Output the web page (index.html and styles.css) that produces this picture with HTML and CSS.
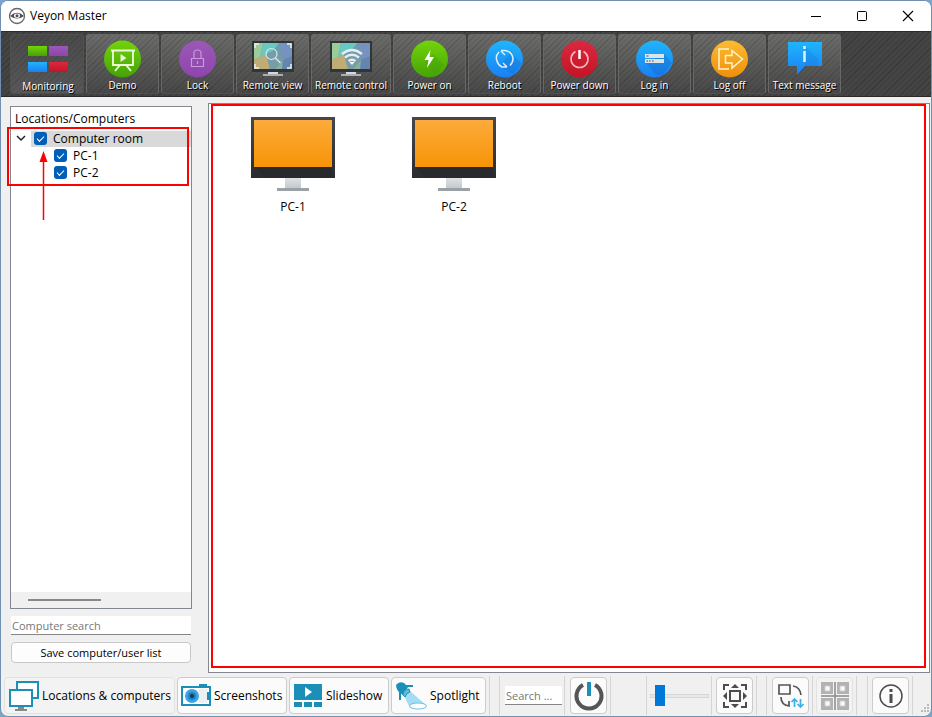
FILE: index.html
```html
<!DOCTYPE html>
<html lang="en">
<head>
  <meta charset="utf-8">
  <meta name="viewport" content="width=device-width, initial-scale=1">
  <title>Veyon Master</title>
  <link rel="stylesheet" href="styles.css">
</head>
<body>
  <!-- Shared icon parts -->
  <svg class="defs" width="0" height="0" aria-hidden="true">
    <defs>
      <linearGradient id="green" x1="0" y1="0" x2="0" y2="1"><stop offset="0" stop-color="#73d40a"/><stop offset="1" stop-color="#45a206"/></linearGradient>
      <linearGradient id="purple" x1="0" y1="0" x2="0" y2="1"><stop offset="0" stop-color="#9b59b6"/><stop offset="1" stop-color="#8e44ad"/></linearGradient>
      <linearGradient id="blue" x1="0" y1="0" x2="0" y2="1"><stop offset="0" stop-color="#1fb5fb"/><stop offset="1" stop-color="#1b7ff4"/></linearGradient>
      <linearGradient id="red" x1="0" y1="0" x2="0" y2="1"><stop offset="0" stop-color="#dc2840"/><stop offset="1" stop-color="#c31525"/></linearGradient>
      <linearGradient id="amber" x1="0" y1="0" x2="0" y2="1"><stop offset="0" stop-color="#fdbc2f"/><stop offset="1" stop-color="#ee8f0c"/></linearGradient>
      <linearGradient id="orange" x1="0" y1="0" x2="0" y2="1"><stop offset="0" stop-color="#fdab3c"/><stop offset="1" stop-color="#f79407"/></linearGradient>
      <linearGradient id="bezel" x1="0" y1="0" x2="0" y2="1"><stop offset="0" stop-color="#44484c"/><stop offset="1" stop-color="#2b2c30"/></linearGradient>
      <linearGradient id="stand" x1="0" y1="0" x2="0" y2="1"><stop offset="0" stop-color="#dde1e3"/><stop offset="1" stop-color="#c3c9cd"/></linearGradient>
      <symbol id="small-monitor" viewBox="0 0 42 40">
        <path d="M0 2h42v31H0z" fill="#30353a"/>
        <path d="M2 4h38v26H2z" fill="#6f9cab"/>
        <path d="M2 4h9L8 18l-6 3z" fill="#9ccb97"/>
        <path d="M11 4h16l-6 8-13 6z" fill="#68c9c2"/>
        <path d="M27 4h13v13l-9 4z" fill="#7693c0"/>
        <path d="M2 21l12-6 4 15H2z" fill="#bfad75"/>
        <path d="M21 12l10 9-8 9h-5l-4-15z" fill="#789da9"/>
        <path d="M31 21l9-4v13H23z" fill="#6684af"/>
        <path d="M31 21l-8 9h7z" fill="#85b39a"/>
        <path d="M16 33h10v3H16z" fill="#d3d8db"/>
        <path d="M11 35h20v2H11z" fill="#a8afb4"/>
      </symbol>
      <symbol id="monitor" viewBox="0 0 84 74">
        <path d="M0 0h84v61H0z" fill="url(#bezel)"/>
        <path d="M3 50h78v11H14z" fill="#292a2e"/>
        <path d="M3 3h78v47H3z" fill="url(#orange)"/>
        <path d="M34 61h16v10H34z" fill="url(#stand)"/>
        <path d="M26 71h32v3H26z" fill="#9aa1a7"/>
      </symbol>
    </defs>
  </svg>

  <div class="window">
    <header class="titlebar">
      <svg class="logo" width="18" height="18" viewBox="0 0 18 18" fill="none">
        <circle cx="9" cy="9" r="7.500" stroke="#63666a" stroke-width="1.300"/>
        <path d="M2 9Q9 2.500 16 9Q9 14 2 9z" fill="#4b4e52"/>
        <ellipse cx="9" cy="8.700" rx="3" ry="2.200" fill="#fff"/>
        <circle cx="9" cy="8.700" r="1.500" fill="#4b4e52"/>
      </svg>
      <h1>Veyon Master</h1>
      <div class="window-controls">
        <button type="button" aria-label="Minimize"><svg width="12" height="12"><path d="M1 6.500h10" stroke="#000"/></svg></button>
        <button type="button" aria-label="Maximize"><svg width="12" height="12"><rect x="1.500" y="1.500" width="9" height="9" rx="1" fill="none" stroke="#000"/></svg></button>
        <button type="button" aria-label="Close"><svg width="12" height="12"><path d="M1 1l10 10M11 1L1 11" stroke="#000" stroke-width="1.100"/></svg></button>
      </div>
    </header>

    <nav class="toolbar">
      <button class="tool active" type="button">
        <svg width="42" height="40" viewBox="0 0 42 40">
          <path d="M1 6h19v10H1z" fill="url(#green)"/><path d="M22 6h19v10H22z" fill="url(#purple)"/>
          <path d="M1 22h19v10H1z" fill="url(#blue)"/><path d="M22 22h19v10H22z" fill="url(#red)"/>
        </svg>
        Monitoring
      </button>
      <button class="tool" type="button">
        <svg width="42" height="40" viewBox="0 0 42 40">
          <circle cx="20.500" cy="20" r="18.500" fill="url(#green)"/>
          <path d="M9 11.500h24M11 12v14h20V12M18 26l-5 6M24 26l5 6" fill="none" stroke="#eaf8d8" stroke-width="1.900"/>
          <path d="M18.500 15l6 4-6 4z" fill="#eaf8d8"/>
        </svg>
        Demo
      </button>
      <button class="tool" type="button">
        <svg width="42" height="40" viewBox="0 0 42 40">
          <circle cx="20.500" cy="20" r="18.500" fill="url(#purple)"/>
          <path d="M14.500 19.500h12v8h-12zM17 19v-5q0-3 3.500-3t3.500 3v5M20.500 22v3" fill="none" stroke="#c99bdc" stroke-width="1.200"/>
        </svg>
        Lock
      </button>
      <button class="tool" type="button">
        <svg width="42" height="40" viewBox="0 0 42 40">
          <use href="#small-monitor" width="42" height="40"/>
          <path d="M3 9V5h4M35 5h4v4M3 25v4h4M35 29h4v-4" fill="none" stroke="#e8f3ee" stroke-width="1.500"/>
          <circle cx="19.500" cy="15" r="5.500" fill="none" stroke="#d9e8ea" stroke-width="1.200"/>
          <path d="M23.500 19l5 5" stroke="#d9e8ea" stroke-width="1.500"/>
        </svg>
        Remote view
      </button>
      <button class="tool wide" type="button">
        <svg width="42" height="40" viewBox="0 0 42 40">
          <use href="#small-monitor" width="42" height="40"/>
          <g fill="none" stroke="#e5eeef" stroke-width="2.400"><path d="M12 15q10-8 20 0M15 18.500q7-5.500 14 0M18.500 22q3.500-2.500 7 0"/></g>
          <path d="M19.500 23h5L22 26z" fill="#fff"/>
        </svg>
        Remote control
      </button>
      <button class="tool" type="button">
        <svg width="42" height="40" viewBox="0 0 42 40">
          <circle cx="20.500" cy="20" r="18.500" fill="url(#green)"/>
          <path d="M24 15l11 11-9 10-10-12z" fill="#3f9d08" opacity=".3"/>
          <path d="M21.500 11l-6 10h4L18 29l7-11h-4.500z" fill="#fff"/>
        </svg>
        Power on
      </button>
      <button class="tool" type="button">
        <svg width="42" height="40" viewBox="0 0 42 40">
          <circle cx="20.500" cy="20" r="18.500" fill="url(#blue)"/>
          <path d="M27 14l11 11-9 10-14-8z" fill="#1261bd" opacity=".25"/>
          <path d="M17 12l4 4M17 11.500h4q7 1 8 8 0 4-3 7M15 13q-4 4-2 9 1 4 5 6h5M23 28l-4-4" fill="none" stroke="#d8efff" stroke-width="1.500"/>
        </svg>
        Reboot
      </button>
      <button class="tool" type="button">
        <svg width="42" height="40" viewBox="0 0 42 40">
          <circle cx="20.500" cy="20" r="18.500" fill="url(#red)"/>
          <path d="M16.500 12.500a8.500 8.500 0 1 0 8 0" fill="none" stroke="#f3b8bd" stroke-width="1.600"/>
          <path d="M20.500 11v9" stroke="#fff" stroke-width="2.500"/>
        </svg>
        Power down
      </button>
      <button class="tool" type="button">
        <svg width="42" height="40" viewBox="0 0 42 40">
          <circle cx="20.500" cy="20" r="18.500" fill="url(#blue)"/>
          <path d="M30 15l8 9-9 12h-7l-10-12z" fill="#1261bd" opacity=".3"/>
          <path d="M11 15h19v4H11zM11 20h19v4H11z" fill="#dde3e6"/>
          <path d="M12.500 17h2M12.500 22h1.500M15 22h1.500M18 22h1.500" stroke="#6f7e88" stroke-width="1.500"/>
        </svg>
        Log in
      </button>
      <button class="tool" type="button">
        <svg width="42" height="40" viewBox="0 0 42 40">
          <circle cx="20.500" cy="20" r="18.500" fill="url(#amber)"/>
          <path d="M20 10H10v20h10M16.500 16.500H23v-5L33.500 20 23 29v-5h-6.500z" fill="none" stroke="#fff3ce" stroke-width="1.500"/>
        </svg>
        Log off
      </button>
      <button class="tool" type="button">
        <svg width="42" height="40" viewBox="0 0 42 40">
          <path d="M4 3h34v24H21l-8 9v-9H4z" fill="url(#blue)"/>
          <path d="M22 8l12 12v7H21z" fill="#1261bd" opacity=".15"/>
          <path d="M20.500 7v3M20.500 12v11" stroke="#dff2ff" stroke-width="2.500"/>
        </svg>
        Text message
      </button>
    </nav>

    <main class="content">
      <aside class="sidebar">
        <section class="tree">
          <h2>Locations/Computers</h2>
          <div class="tree-body">
            <div class="tree-row room">
              <svg class="chevron" width="10" height="7" viewBox="0 0 10 7"><path d="M1 1l4 4 4-4" fill="none" stroke="#222" stroke-width="1.500"/></svg>
              <label><input type="checkbox" checked>Computer room</label>
            </div>
            <div class="tree-row computer"><label><input type="checkbox" checked>PC-1</label></div>
            <div class="tree-row computer"><label><input type="checkbox" checked>PC-2</label></div>
            <div class="highlight"></div>
            <svg class="arrow" width="9" height="69" viewBox="0 0 9 69"><path d="M4.500 10v59" stroke="#f00" stroke-width="1.500"/><path d="M4.500 0L8.500 11h-8z" fill="#f00"/></svg>
          </div>
          <div class="tree-scroll"><span></span></div>
        </section>
        <input class="search" type="text" placeholder="Computer search" aria-label="Computer search">
        <button class="save" type="button">Save computer/user list</button>
      </aside>

      <section class="view">
        <div class="view-frame">
          <figure class="pc">
            <svg width="84" height="74"><use href="#monitor" width="84" height="74"/></svg>
            <figcaption>PC-1</figcaption>
          </figure>
          <figure class="pc">
            <svg width="84" height="74"><use href="#monitor" width="84" height="74"/></svg>
            <figcaption>PC-2</figcaption>
          </figure>
        </div>
      </section>
    </main>

    <footer class="statusbar">
      <div class="panel-buttons">
        <button class="btn pressed locations" type="button">
          <svg width="30" height="30" viewBox="0 0 30 30">
            <path d="M8 1h21v16H8z" fill="#fff" stroke="#1b8fb8" stroke-width="2"/>
            <path d="M1 9h22v16H1z" fill="#fff" stroke="#1b8fb8" stroke-width="2"/>
            <path d="M9 26h6v2h3v2H6v-2h3z" fill="#888"/>
          </svg>
          Locations &amp; computers
        </button>
        <button class="btn screenshots" type="button">
          <svg width="30" height="30" viewBox="0 0 30 30">
            <path d="M18 3h8v3h-8z" fill="#1b8fb8"/>
            <path d="M1 6h28v18H1z" fill="#fff" stroke="#1b8fb8" stroke-width="2"/>
            <path d="M18 8h8v14h-8z" fill="#edf0f2"/><path d="M26 11h3v8h-3z" fill="#1b8fb8"/>
            <circle cx="11" cy="15" r="7" fill="#38a4e2"/><circle cx="11" cy="15" r="4" fill="#2180c0"/><circle cx="11" cy="15" r="2" fill="#153957"/>
          </svg>
          Screenshots
        </button>
        <button class="btn slideshow" type="button">
          <svg width="30" height="30" viewBox="0 0 30 30">
            <path d="M1 3h28v16H1zM1 21h8v5H1zM11 21h8v5h-8zM21 21h8v5h-8z" fill="#1b8fb8"/><path d="M12 6l7 5-7 5z" fill="#fff"/>
          </svg>
          Slideshow
        </button>
        <button class="btn spotlight" type="button">
          <svg width="32" height="30" viewBox="0 0 32 30">
            <path d="M9 15l6-5 16 14q-3 4-16 3z" fill="#a3ddf5"/>
            <ellipse cx="23" cy="25" rx="8.500" ry="3" fill="#fff" stroke="#6fc3e4"/>
            <path d="M1 4q3-4 8-2l4 4-5 8q-7-4-7-10zM4 8h2v11H4zM9 4h9v2H9z" fill="#1b8fb8"/>
            <path d="M8 14q0-6 6-6l1 3q-4 1-5 5z" fill="#63bbd9" stroke="#1b8fb8"/>
          </svg>
          Spotlight
        </button>
      </div>

      <div class="group filter">
        <input class="search" type="text" placeholder="Search ..." aria-label="Search">
        <span class="divider"></span>
        <button class="btn square" type="button" aria-label="Powered on only">
          <svg width="30" height="30" viewBox="0 0 30 30">
            <path d="M9 4a12.500 12.500 0 1 0 12 0" fill="none" stroke="#555" stroke-width="4"/><path d="M15 1v14" stroke="#1b8fb8" stroke-width="4"/>
          </svg>
        </button>
      </div>

      <div class="group zoom">
        <input class="slider" type="range" min="0" max="100" value="9" aria-label="Icon size">
        <span class="divider"></span>
        <button class="btn square" type="button" aria-label="Fit">
          <svg width="30" height="30" viewBox="0 0 30 30" fill="none" stroke="#4d4d4d" stroke-width="2">
            <path d="M4 9V4h5M21 4h5v5M4 21v5h5M21 26h5v-5M10 10h10v10H10z"/>
            <path d="M15 3l4 4h-8zM15 27l4-4h-8zM3 15l4-4v8zM27 15l-4-4v8z" fill="#4d4d4d" stroke="none"/>
          </svg>
        </button>
      </div>

      <div class="group arrange">
        <button class="btn square" type="button" aria-label="Custom order">
          <svg width="30" height="30" viewBox="0 0 30 30" fill="none">
            <path d="M3 4h11v9H3zM17 5q7 1 8 9M5 16q0 8 8 9v-5" stroke="#555" stroke-width="1.700"/>
            <path d="M18.500 26v-8M15.500 21l3-3 3 3M24.500 18v8M21.500 23l3 3 3-3" stroke="#3daee9" stroke-width="1.700"/>
          </svg>
        </button>
        <span class="divider"></span>
        <button class="btn square pressed" type="button" aria-label="Align to grid">
          <svg width="30" height="30" viewBox="0 0 30 30" fill="none">
            <path d="M1 1h12v12H1zM17 1h12v12H17zM1 17h12v12H1zM17 17h12v12H17z" fill="#b2b2b2"/>
            <path d="M5 5h5v5H5zM20 5h5v5h-5zM5 20h5v5H5zM20 20h5v5h-5z" fill="#fafafa" stroke="#ccc"/>
            <path d="M15 1v28M1 15h28" stroke="#888" stroke-width="1.500"/>
          </svg>
        </button>
      </div>

      <div class="group about">
        <button class="btn square" type="button" aria-label="About">
          <svg width="30" height="30" viewBox="0 0 30 30" fill="none" stroke="#4d4d4d">
            <circle cx="15" cy="15" r="11" stroke-width="1.500"/><path d="M15 8v3M15 13v9" stroke-width="3"/>
          </svg>
        </button>
      </div>
      <svg class="grip" width="9" height="9" viewBox="0 0 9 9"><path d="M6 0h2v2H6zM3 3h2v2H3zM6 3h2v2H6zM0 6h2v2H0zM3 6h2v2H3zM6 6h2v2H6z" fill="#bbb"/></svg>
    </footer>
  </div>
</body>
</html>
```

FILE: styles.css
```css
:root {
  --bg: #f0f0f0;
  --line: #828790;
  --soft-line: #d5d5d5;
  --mark: #f00;
  --accent: #005fb8;
}
*, *::before, *::after { box-sizing: border-box; }
body { margin: 0; background: #7ba6cb; color: #000; font: 12px/16px "Open Sans", "Noto Sans", sans-serif; }
button, input { font: inherit; color: inherit; }
svg { display: block; flex: none; }
h1, h2 { margin: 0; font-size: 12px; font-weight: 400; }
.defs { position: absolute; }
.window { display: flex; flex-direction: column; height: 100vh; border: 1px solid #6e91b0; border-radius: 8px; background: var(--bg); overflow: hidden; }

/* Title bar */
.titlebar { display: flex; align-items: center; gap: 4px; height: 30px; padding-left: 7px; background: #fff; }
.window-controls { display: flex; margin-left: auto; }
.window-controls button { display: flex; align-items: center; justify-content: center; width: 46px; height: 30px; padding: 0; border: 0; background: none; }

/* Main toolbar */
.toolbar { display: flex; gap: 2px; height: 66px; padding: 2px 9px; border: solid #2b2b2b; border-width: 1px 0; background: repeating-linear-gradient(135deg, #3a3a3a 0 1px, #444 1px 4px); }
.tool { display: flex; flex-direction: column; align-items: center; width: 73px; padding: 4px 0 0; border: 1px solid #686868; border-bottom-color: #505050; border-radius: 3px; background: repeating-linear-gradient(135deg, rgba(0, 0, 0, .12) 0 1px, transparent 1px 4px), linear-gradient(#6b6b69, #484848); color: #fff; font-size: 10px; line-height: 12px; text-shadow: 1px 1px 0 #000; white-space: nowrap; }
.tool.wide { width: 80px; }
.tool.active { width: 74px; padding: 5px 0 0 2px; border-color: #505050; background: repeating-linear-gradient(135deg, rgba(0, 0, 0, .1) 0 1px, transparent 1px 4px), linear-gradient(#4a4a4a, #585858); }

/* Content */
.content { display: flex; flex: 1; gap: 16px; min-height: 0; padding: 6px 1px 2px 9px; }
.sidebar { display: flex; flex-direction: column; width: 182px; padding: 3px 0 10px; }
.tree { display: flex; flex: 1; flex-direction: column; margin-bottom: 7px; border: 1px solid var(--line); background: #fff; }
.tree h2 { height: 23px; padding: 4px 4px 0; }
.tree-body { position: relative; flex: 1; }
.tree-row { display: flex; align-items: center; height: 17px; }
.tree-row label { display: flex; flex: 1; align-items: center; gap: 6px; padding-left: 3px; }
.room { gap: 5px; padding-left: 5px; }
.room label { background: #d9d9d9; }
.computer { padding-left: 40px; }
.tree input { appearance: none; width: 13px; height: 13px; margin: 0; border-radius: 3px; background: var(--accent); }
.tree input:checked::after { content: ""; display: block; width: 7px; height: 4px; margin: 4px 3px; border: solid #fff; border-width: 0 0 1px 1px; transform: rotate(-45deg); }
.highlight { position: absolute; top: -3px; left: -4px; right: 2px; height: 59px; border: 2px solid var(--mark); }
.arrow { position: absolute; top: 21px; left: 28px; }
.tree-scroll { height: 16px; padding: 7px 17px; background: var(--bg); }
.tree-scroll span { display: block; width: 73px; height: 2px; background: #888; }
.search { min-width: 0; height: 19px; padding: 0 1px; border: 0; border-bottom: 1px solid #868686; background: #fff; font-size: 11px; }
.search::placeholder { color: #777; opacity: 1; }
.sidebar .search { margin: 0 1px 7px; }
.save { height: 21px; margin: 0 1px; padding: 0; border: 1px solid #c8c8c8; border-radius: 4px; background: #fdfdfd; font-size: 11px; line-height: 16px; }
.view { flex: 1; padding: 0 3px 4px 2px; border: 1px solid var(--line); background: #fff; }
.view-frame { display: flex; align-items: flex-start; gap: 77px; height: 100%; padding: 11px 38px; border: 2px solid var(--mark); }
.pc { margin: 0; text-align: center; }
.pc figcaption { margin-top: 8px; }

/* Bottom bar */
.statusbar { display: flex; align-items: center; height: 41px; padding-left: 3px; }
.panel-buttons { display: flex; align-items: center; gap: 2px; height: 39px; padding-right: 3px; border-right: 1px solid var(--soft-line); }
.btn { display: flex; align-items: center; gap: 3px; height: 37px; padding: 0 3px; border: 1px solid #ccc; border-radius: 4px; background: #fbfbfb; white-space: nowrap; }
.btn.pressed { border-color: #e2e2e2; background: #f3f3f3; }
.locations { width: 171px; padding-left: 4px; }
.screenshots { width: 110px; }
.slideshow { width: 100px; }
.spotlight { width: 95px; }
.square { width: 37px; padding: 0; justify-content: center; }
.group { display: flex; align-items: center; gap: 3px; height: 39px; padding: 0 3px 0 5px; border: solid var(--soft-line); border-width: 0 1px; }
.divider { align-self: stretch; width: 1px; background: var(--soft-line); }
.filter { gap: 2px; margin-left: 9px; }
.filter .search { width: 57px; }
.filter .square { margin-left: 3px; }
.zoom { gap: 2px; margin-left: 35px; padding-left: 3px; }
.zoom .square { margin-left: 2px; }
.arrange { margin-left: 9px; }
.about { margin-left: 10px; padding-left: 4px; }
.slider { appearance: none; width: 59px; height: 21px; margin: 0; background: none; }
.slider::-webkit-slider-runnable-track { height: 4px; border: 1px solid #d6d6d6; background: #e8e8e8; }
.slider::-webkit-slider-thumb { appearance: none; width: 10px; height: 21px; margin-top: -10px; background: #0078d7; }
.grip { align-self: flex-end; margin: 0 1px 3px auto; }
```
